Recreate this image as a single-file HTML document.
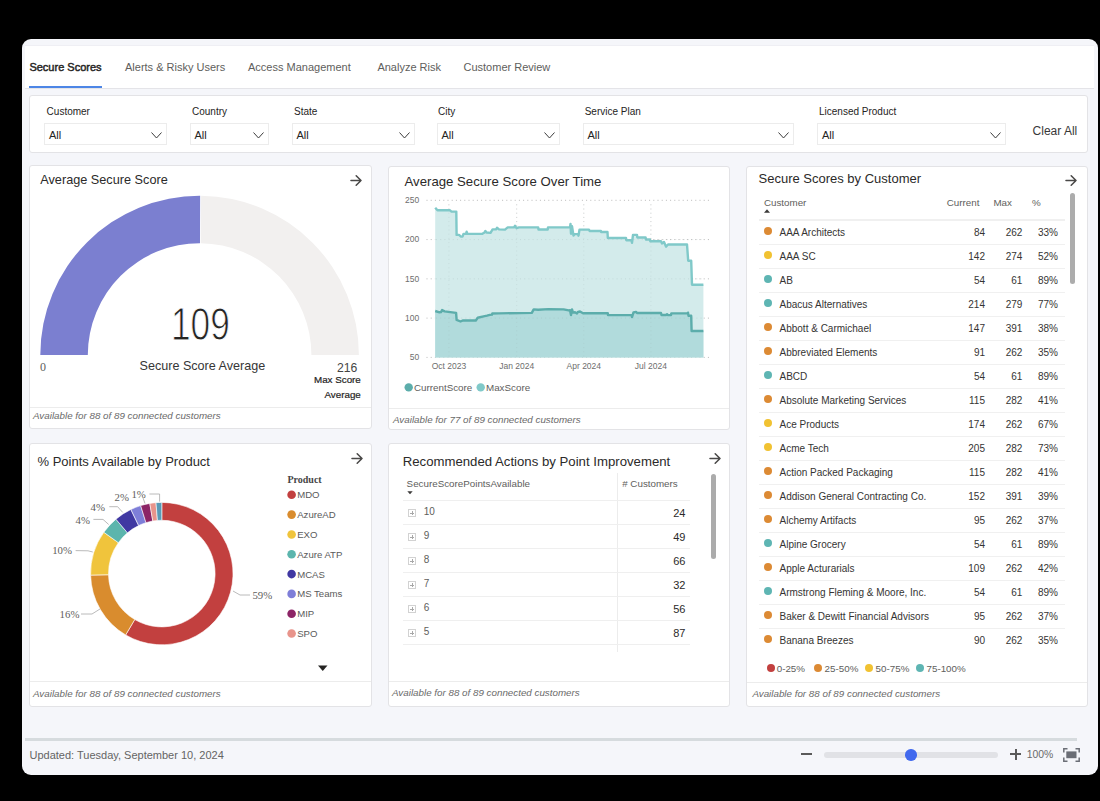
<!DOCTYPE html><html><head><meta charset="utf-8"><style>
html,body{margin:0;padding:0}
body{width:1100px;height:801px;background:#000;position:relative;overflow:hidden;font-family:"Liberation Sans",sans-serif}
.t{position:absolute;line-height:1;white-space:nowrap}
</style></head><body>
<div style="position:absolute;left:22px;top:39px;width:1076px;height:736px;background:#f5f6fa;border-radius:9px"></div>
<div style="position:absolute;left:25px;top:45px;width:1069px;height:1px;background:#efeff4"></div>
<div style="position:absolute;left:25px;top:46px;width:1069px;height:42px;background:#fff"></div>
<div style="position:absolute;left:25px;top:88px;width:1069px;height:1px;background:#e4e4e8"></div>
<div style="position:absolute;left:29px;top:86px;width:73px;height:2px;background:#4d86e6"></div>
<div class="t" style="left:29.40px;top:61.69px;font-size:11px;color:#252423;font-weight:400;font-style:normal;font-family:'Liberation Sans', sans-serif;-webkit-text-stroke:0.45px #252423">Secure Scores</div>
<div class="t" style="left:125.00px;top:61.69px;font-size:11px;color:#605e5c;font-weight:400;font-style:normal;font-family:'Liberation Sans', sans-serif;">Alerts &amp; Risky Users</div>
<div class="t" style="left:248.00px;top:61.69px;font-size:11px;color:#605e5c;font-weight:400;font-style:normal;font-family:'Liberation Sans', sans-serif;">Access Management</div>
<div class="t" style="left:377.40px;top:61.69px;font-size:11px;color:#605e5c;font-weight:400;font-style:normal;font-family:'Liberation Sans', sans-serif;">Analyze Risk</div>
<div class="t" style="left:463.50px;top:61.69px;font-size:11px;color:#605e5c;font-weight:400;font-style:normal;font-family:'Liberation Sans', sans-serif;">Customer Review</div>
<div style="position:absolute;left:29px;top:95px;width:1059px;height:58px;background:#fff;border:1px solid #e3e3e6;border-radius:3px;box-sizing:border-box"></div>
<div class="t" style="left:46.60px;top:106.83px;font-size:10px;color:#252423;font-weight:400;font-style:normal;font-family:'Liberation Sans', sans-serif;">Customer</div>
<div style="position:absolute;left:44px;top:123px;width:123px;height:21.5px;border:1px solid #ececec;box-sizing:border-box;background:#fff"><svg width="11" height="7" viewBox="0 0 11 7" style="position:absolute;right:4px;top:7.5px"><path d="M0.5 0.5 L5.5 6 L10.5 0.5" fill="none" stroke="#3c3c3c" stroke-width="1"/></svg></div>
<div class="t" style="left:49.00px;top:130.29px;font-size:11px;color:#252423;font-weight:400;font-style:normal;font-family:'Liberation Sans', sans-serif;">All</div>
<div class="t" style="left:192.00px;top:106.83px;font-size:10px;color:#252423;font-weight:400;font-style:normal;font-family:'Liberation Sans', sans-serif;">Country</div>
<div style="position:absolute;left:189.5px;top:123px;width:79px;height:21.5px;border:1px solid #ececec;box-sizing:border-box;background:#fff"><svg width="11" height="7" viewBox="0 0 11 7" style="position:absolute;right:4px;top:7.5px"><path d="M0.5 0.5 L5.5 6 L10.5 0.5" fill="none" stroke="#3c3c3c" stroke-width="1"/></svg></div>
<div class="t" style="left:194.50px;top:130.29px;font-size:11px;color:#252423;font-weight:400;font-style:normal;font-family:'Liberation Sans', sans-serif;">All</div>
<div class="t" style="left:294.00px;top:106.83px;font-size:10px;color:#252423;font-weight:400;font-style:normal;font-family:'Liberation Sans', sans-serif;">State</div>
<div style="position:absolute;left:291.5px;top:123px;width:123px;height:21.5px;border:1px solid #ececec;box-sizing:border-box;background:#fff"><svg width="11" height="7" viewBox="0 0 11 7" style="position:absolute;right:4px;top:7.5px"><path d="M0.5 0.5 L5.5 6 L10.5 0.5" fill="none" stroke="#3c3c3c" stroke-width="1"/></svg></div>
<div class="t" style="left:296.50px;top:130.29px;font-size:11px;color:#252423;font-weight:400;font-style:normal;font-family:'Liberation Sans', sans-serif;">All</div>
<div class="t" style="left:438.00px;top:106.83px;font-size:10px;color:#252423;font-weight:400;font-style:normal;font-family:'Liberation Sans', sans-serif;">City</div>
<div style="position:absolute;left:436.5px;top:123px;width:123px;height:21.5px;border:1px solid #ececec;box-sizing:border-box;background:#fff"><svg width="11" height="7" viewBox="0 0 11 7" style="position:absolute;right:4px;top:7.5px"><path d="M0.5 0.5 L5.5 6 L10.5 0.5" fill="none" stroke="#3c3c3c" stroke-width="1"/></svg></div>
<div class="t" style="left:441.50px;top:130.29px;font-size:11px;color:#252423;font-weight:400;font-style:normal;font-family:'Liberation Sans', sans-serif;">All</div>
<div class="t" style="left:584.70px;top:106.83px;font-size:10px;color:#252423;font-weight:400;font-style:normal;font-family:'Liberation Sans', sans-serif;">Service Plan</div>
<div style="position:absolute;left:582.5px;top:123px;width:211px;height:21.5px;border:1px solid #ececec;box-sizing:border-box;background:#fff"><svg width="11" height="7" viewBox="0 0 11 7" style="position:absolute;right:4px;top:7.5px"><path d="M0.5 0.5 L5.5 6 L10.5 0.5" fill="none" stroke="#3c3c3c" stroke-width="1"/></svg></div>
<div class="t" style="left:587.50px;top:130.29px;font-size:11px;color:#252423;font-weight:400;font-style:normal;font-family:'Liberation Sans', sans-serif;">All</div>
<div class="t" style="left:819.00px;top:106.83px;font-size:10px;color:#252423;font-weight:400;font-style:normal;font-family:'Liberation Sans', sans-serif;">Licensed Product</div>
<div style="position:absolute;left:817px;top:123px;width:189px;height:21.5px;border:1px solid #ececec;box-sizing:border-box;background:#fff"><svg width="11" height="7" viewBox="0 0 11 7" style="position:absolute;right:4px;top:7.5px"><path d="M0.5 0.5 L5.5 6 L10.5 0.5" fill="none" stroke="#3c3c3c" stroke-width="1"/></svg></div>
<div class="t" style="left:822.00px;top:130.29px;font-size:11px;color:#252423;font-weight:400;font-style:normal;font-family:'Liberation Sans', sans-serif;">All</div>
<div class="t" style="left:1032.60px;top:125.34px;font-size:12px;color:#383838;font-weight:400;font-style:normal;font-family:'Liberation Sans', sans-serif;">Clear All</div>
<div style="position:absolute;left:29px;top:165px;width:343px;height:264px;background:#fff;border:1px solid #e3e3e6;border-radius:3px;box-sizing:border-box"></div>
<div style="position:absolute;left:30px;top:406.5px;width:341px;height:1px;background:#ececec"></div>
<div class="t" style="left:33.00px;top:411.20px;font-size:9.8px;color:#6a6a6a;font-weight:400;font-style:italic;font-family:'Liberation Sans', sans-serif;">Available for 88 of 89 connected customers</div>
<div style="position:absolute;left:388px;top:166px;width:342px;height:264px;background:#fff;border:1px solid #e3e3e6;border-radius:3px;box-sizing:border-box"></div>
<div style="position:absolute;left:389px;top:407.5px;width:340px;height:1px;background:#ececec"></div>
<div class="t" style="left:393.00px;top:414.50px;font-size:9.8px;color:#6a6a6a;font-weight:400;font-style:italic;font-family:'Liberation Sans', sans-serif;">Available for 77 of 89 connected customers</div>
<div style="position:absolute;left:746px;top:166px;width:342px;height:541px;background:#fff;border:1px solid #e3e3e6;border-radius:3px;box-sizing:border-box"></div>
<div style="position:absolute;left:747px;top:681.5px;width:340px;height:1px;background:#ececec"></div>
<div class="t" style="left:752.40px;top:688.60px;font-size:9.8px;color:#6a6a6a;font-weight:400;font-style:italic;font-family:'Liberation Sans', sans-serif;">Available for 88 of 89 connected customers</div>
<div style="position:absolute;left:29px;top:443px;width:343px;height:264px;background:#fff;border:1px solid #e3e3e6;border-radius:3px;box-sizing:border-box"></div>
<div style="position:absolute;left:30px;top:680.5px;width:341px;height:1px;background:#ececec"></div>
<div class="t" style="left:33.00px;top:688.90px;font-size:9.8px;color:#6a6a6a;font-weight:400;font-style:italic;font-family:'Liberation Sans', sans-serif;">Available for 88 of 89 connected customers</div>
<div style="position:absolute;left:388px;top:443px;width:342px;height:264px;background:#fff;border:1px solid #e3e3e6;border-radius:3px;box-sizing:border-box"></div>
<div style="position:absolute;left:389px;top:680.5px;width:340px;height:1px;background:#ececec"></div>
<div class="t" style="left:392.00px;top:688.30px;font-size:9.8px;color:#6a6a6a;font-weight:400;font-style:italic;font-family:'Liberation Sans', sans-serif;">Available for 88 of 89 connected customers</div>
<div class="t" style="left:40.30px;top:173.85px;font-size:12.7px;color:#2b2a29;font-weight:400;font-style:normal;font-family:'Liberation Sans', sans-serif;">Average Secure Score</div>
<svg style="position:absolute;left:349.45px;top:174.10px" width="14" height="13" viewBox="0 0 14 13"><path d="M2 6.5 H12 M7.2 1.7 L12 6.5 L7.2 11.3" fill="none" stroke="#4a4948" stroke-width="1.55" stroke-linecap="round" stroke-linejoin="round"/></svg>
<div class="t" style="left:404.50px;top:174.63px;font-size:13.2px;color:#2b2a29;font-weight:400;font-style:normal;font-family:'Liberation Sans', sans-serif;">Average Secure Score Over Time</div>
<div class="t" style="left:758.50px;top:172.00px;font-size:13px;color:#2b2a29;font-weight:400;font-style:normal;font-family:'Liberation Sans', sans-serif;">Secure Scores by Customer</div>
<svg style="position:absolute;left:1064.15px;top:174.10px" width="14" height="13" viewBox="0 0 14 13"><path d="M2 6.5 H12 M7.2 1.7 L12 6.5 L7.2 11.3" fill="none" stroke="#4a4948" stroke-width="1.55" stroke-linecap="round" stroke-linejoin="round"/></svg>
<div class="t" style="left:37.50px;top:454.80px;font-size:13px;color:#2b2a29;font-weight:400;font-style:normal;font-family:'Liberation Sans', sans-serif;">% Points Available by Product</div>
<svg style="position:absolute;left:349.55px;top:452.00px" width="14" height="13" viewBox="0 0 14 13"><path d="M2 6.5 H12 M7.2 1.7 L12 6.5 L7.2 11.3" fill="none" stroke="#4a4948" stroke-width="1.55" stroke-linecap="round" stroke-linejoin="round"/></svg>
<div class="t" style="left:402.70px;top:454.63px;font-size:13.2px;color:#2b2a29;font-weight:400;font-style:normal;font-family:'Liberation Sans', sans-serif;">Recommended Actions by Point Improvement</div>
<svg style="position:absolute;left:707.65px;top:452.00px" width="14" height="13" viewBox="0 0 14 13"><path d="M2 6.5 H12 M7.2 1.7 L12 6.5 L7.2 11.3" fill="none" stroke="#4a4948" stroke-width="1.55" stroke-linecap="round" stroke-linejoin="round"/></svg>
<div style="position:absolute;left:25px;top:738.2px;width:1052px;height:2.5px;background:#d6dbde"></div>
<div class="t" style="left:29.50px;top:750.29px;font-size:11px;color:#646464;font-weight:400;font-style:normal;font-family:'Liberation Sans', sans-serif;">Updated: Tuesday, September 10, 2024</div>
<svg style="position:absolute;left:0;top:0" width="1100" height="801"><path d="M40.30 355.00 A159.3 159.3 0 0 1 200.16 195.70 L199.99 243.20 A111.8 111.8 0 0 0 87.80 355.00 Z" fill="#7b7fd0"/><path d="M201.13 195.71 A159.3 159.3 0 0 1 358.90 355.00 L311.40 355.00 A111.8 111.8 0 0 0 200.67 243.21 Z" fill="#f2f0ef"/></svg>
<div class="t" style="left:170.50px;top:302.48px;font-size:45.5px;color:#252423;font-weight:400;font-style:normal;font-family:'Liberation Sans', sans-serif;transform:scaleX(0.775);transform-origin:0 0;-webkit-text-stroke:1px #fff">109</div>
<div class="t" style="left:139.50px;top:360.13px;font-size:12.6px;color:#363636;font-weight:400;font-style:normal;font-family:'Liberation Sans', sans-serif;">Secure Score Average</div>
<div class="t" style="left:39.90px;top:361.45px;font-size:12px;color:#605e5c;font-weight:400;font-style:normal;font-family:'Liberation Serif', serif;">0</div>
<div class="t" style="right:742.70px;top:361.67px;font-size:12.2px;color:#444444;font-weight:400;font-style:normal;font-family:'Liberation Sans', sans-serif;">216</div>
<div class="t" style="right:739.20px;top:374.70px;font-size:9.8px;color:#252423;font-weight:400;font-style:normal;font-family:'Liberation Sans', sans-serif;-webkit-text-stroke:0.2px #252423">Max Score</div>
<div class="t" style="right:739.20px;top:389.70px;font-size:9.8px;color:#252423;font-weight:400;font-style:normal;font-family:'Liberation Sans', sans-serif;-webkit-text-stroke:0.2px #252423">Average</div>
<svg style="position:absolute;left:0;top:0" width="1100" height="801"><line x1="426.5" x2="711" y1="357.40" y2="357.40" stroke="#b9b9b9" stroke-width="1" stroke-dasharray="1 3.2"/><line x1="426.5" x2="711" y1="318.12" y2="318.12" stroke="#b9b9b9" stroke-width="1" stroke-dasharray="1 3.2"/><line x1="426.5" x2="711" y1="278.85" y2="278.85" stroke="#b9b9b9" stroke-width="1" stroke-dasharray="1 3.2"/><line x1="426.5" x2="711" y1="239.57" y2="239.57" stroke="#b9b9b9" stroke-width="1" stroke-dasharray="1 3.2"/><line x1="426.5" x2="711" y1="200.30" y2="200.30" stroke="#b9b9b9" stroke-width="1" stroke-dasharray="1 3.2"/><line x1="448.9" x2="448.9" y1="204.30" y2="357.40" stroke="#d9d9d9" stroke-width="1" stroke-dasharray="1 3.2"/><line x1="516.7" x2="516.7" y1="204.30" y2="357.40" stroke="#d9d9d9" stroke-width="1" stroke-dasharray="1 3.2"/><line x1="583.8" x2="583.8" y1="204.30" y2="357.40" stroke="#d9d9d9" stroke-width="1" stroke-dasharray="1 3.2"/><line x1="650.9" x2="650.9" y1="204.30" y2="357.40" stroke="#d9d9d9" stroke-width="1" stroke-dasharray="1 3.2"/><path d="M435.20 207.76 L437.50 210.28 L450.00 210.28 L451.50 211.61 L456.30 211.61 L456.60 234.86 L459.00 234.86 L461.00 236.59 L462.50 236.59 L463.50 233.84 L466.00 233.84 L466.60 231.72 L467.40 233.84 L482.40 233.84 L484.50 232.51 L485.40 230.93 L486.50 232.51 L490.50 232.90 L492.60 229.36 L496.00 229.36 L497.00 227.79 L499.00 229.36 L505.00 229.60 L507.70 227.40 L514.00 227.40 L515.00 225.83 L516.50 228.19 L519.00 227.40 L538.20 227.40 L538.50 229.52 L547.70 229.52 L548.00 227.40 L570.00 227.40 L570.50 223.86 L571.00 233.76 L572.00 226.22 L573.50 235.65 L574.50 234.08 L578.00 234.08 L578.50 235.65 L579.50 229.60 L589.00 229.60 L589.50 230.93 L600.90 230.93 L601.00 231.96 L607.50 231.96 L607.80 238.00 L626.00 238.00 L626.30 240.20 L631.50 240.20 L632.00 242.87 L633.00 234.86 L637.00 234.86 L637.30 237.45 L645.60 237.45 L645.90 239.57 L650.00 239.57 L650.30 241.30 L661.00 241.30 L662.00 243.50 L664.00 241.93 L666.00 246.64 L668.00 244.45 L687.00 244.45 L688.20 260.78 L691.20 260.78 L692.00 284.74 L703.40 284.74 L703.4 357.40 L435.2 357.40 Z" fill="#d3ebeb"/><path d="M435.20 310.98 L439.50 312.31 L441.00 312.16 L442.10 310.11 L444.60 311.37 L456.10 312.86 L456.60 319.93 L460.50 321.50 L463.10 320.48 L475.80 320.48 L477.70 317.73 L484.70 316.08 L487.00 315.61 L489.80 314.83 L492.00 314.67 L492.30 313.49 L498.70 313.33 L531.80 312.86 L533.70 309.33 L538.10 309.72 L548.30 309.09 L563.60 309.33 L568.70 310.43 L570.00 310.27 L571.00 314.98 L572.00 309.48 L573.00 312.63 L575.00 312.23 L577.00 313.41 L578.00 311.84 L580.00 311.45 L583.00 313.18 L607.80 313.25 L608.00 315.14 L631.60 315.14 L632.00 317.03 L633.50 312.47 L636.00 311.84 L637.00 313.02 L661.00 313.02 L661.50 314.98 L666.00 314.98 L667.00 314.20 L668.00 315.14 L671.00 315.14 L671.30 313.41 L687.60 313.41 L688.00 312.63 L688.50 315.77 L691.20 315.77 L691.60 330.93 L703.40 330.93 L703.4 357.40 L435.2 357.40 Z" fill="#b1dbdc"/><path d="M435.20 207.76 L437.50 210.28 L450.00 210.28 L451.50 211.61 L456.30 211.61 L456.60 234.86 L459.00 234.86 L461.00 236.59 L462.50 236.59 L463.50 233.84 L466.00 233.84 L466.60 231.72 L467.40 233.84 L482.40 233.84 L484.50 232.51 L485.40 230.93 L486.50 232.51 L490.50 232.90 L492.60 229.36 L496.00 229.36 L497.00 227.79 L499.00 229.36 L505.00 229.60 L507.70 227.40 L514.00 227.40 L515.00 225.83 L516.50 228.19 L519.00 227.40 L538.20 227.40 L538.50 229.52 L547.70 229.52 L548.00 227.40 L570.00 227.40 L570.50 223.86 L571.00 233.76 L572.00 226.22 L573.50 235.65 L574.50 234.08 L578.00 234.08 L578.50 235.65 L579.50 229.60 L589.00 229.60 L589.50 230.93 L600.90 230.93 L601.00 231.96 L607.50 231.96 L607.80 238.00 L626.00 238.00 L626.30 240.20 L631.50 240.20 L632.00 242.87 L633.00 234.86 L637.00 234.86 L637.30 237.45 L645.60 237.45 L645.90 239.57 L650.00 239.57 L650.30 241.30 L661.00 241.30 L662.00 243.50 L664.00 241.93 L666.00 246.64 L668.00 244.45 L687.00 244.45 L688.20 260.78 L691.20 260.78 L692.00 284.74 L703.40 284.74" fill="none" stroke="#80c9c9" stroke-width="2.4" stroke-linejoin="round"/><path d="M435.20 310.98 L439.50 312.31 L441.00 312.16 L442.10 310.11 L444.60 311.37 L456.10 312.86 L456.60 319.93 L460.50 321.50 L463.10 320.48 L475.80 320.48 L477.70 317.73 L484.70 316.08 L487.00 315.61 L489.80 314.83 L492.00 314.67 L492.30 313.49 L498.70 313.33 L531.80 312.86 L533.70 309.33 L538.10 309.72 L548.30 309.09 L563.60 309.33 L568.70 310.43 L570.00 310.27 L571.00 314.98 L572.00 309.48 L573.00 312.63 L575.00 312.23 L577.00 313.41 L578.00 311.84 L580.00 311.45 L583.00 313.18 L607.80 313.25 L608.00 315.14 L631.60 315.14 L632.00 317.03 L633.50 312.47 L636.00 311.84 L637.00 313.02 L661.00 313.02 L661.50 314.98 L666.00 314.98 L667.00 314.20 L668.00 315.14 L671.00 315.14 L671.30 313.41 L687.60 313.41 L688.00 312.63 L688.50 315.77 L691.20 315.77 L691.60 330.93 L703.40 330.93" fill="none" stroke="#5cadab" stroke-width="2.4" stroke-linejoin="round"/><line x1="436" x2="703" y1="318.12" y2="318.12" stroke="#9aa" stroke-opacity="0.25" stroke-width="1" stroke-dasharray="1 3.2"/><line x1="436" x2="703" y1="278.85" y2="278.85" stroke="#9aa" stroke-opacity="0.25" stroke-width="1" stroke-dasharray="1 3.2"/><line x1="436" x2="703" y1="239.57" y2="239.57" stroke="#9aa" stroke-opacity="0.25" stroke-width="1" stroke-dasharray="1 3.2"/><line x1="448.9" x2="448.9" y1="204.30" y2="357.40" stroke="#9aa" stroke-opacity="0.2" stroke-width="1" stroke-dasharray="1 3.2"/><line x1="516.7" x2="516.7" y1="204.30" y2="357.40" stroke="#9aa" stroke-opacity="0.2" stroke-width="1" stroke-dasharray="1 3.2"/><line x1="583.8" x2="583.8" y1="204.30" y2="357.40" stroke="#9aa" stroke-opacity="0.2" stroke-width="1" stroke-dasharray="1 3.2"/><line x1="650.9" x2="650.9" y1="204.30" y2="357.40" stroke="#9aa" stroke-opacity="0.2" stroke-width="1" stroke-dasharray="1 3.2"/><circle cx="408.7" cy="387.4" r="4.2" fill="#5cadab"/><circle cx="480.7" cy="387.4" r="4.2" fill="#80c9c9"/></svg>
<div class="t" style="right:680.80px;top:353.30px;font-size:8.5px;color:#6e6e6e;font-weight:400;font-style:normal;font-family:'Liberation Sans', sans-serif;">50</div>
<div class="t" style="right:680.80px;top:314.03px;font-size:8.5px;color:#6e6e6e;font-weight:400;font-style:normal;font-family:'Liberation Sans', sans-serif;">100</div>
<div class="t" style="right:680.80px;top:274.75px;font-size:8.5px;color:#6e6e6e;font-weight:400;font-style:normal;font-family:'Liberation Sans', sans-serif;">150</div>
<div class="t" style="right:680.80px;top:235.48px;font-size:8.5px;color:#6e6e6e;font-weight:400;font-style:normal;font-family:'Liberation Sans', sans-serif;">200</div>
<div class="t" style="right:680.80px;top:196.20px;font-size:8.5px;color:#6e6e6e;font-weight:400;font-style:normal;font-family:'Liberation Sans', sans-serif;">250</div>
<div class="t" style="left:448.90px;transform:translateX(-50%);top:361.80px;font-size:8.5px;color:#6e6e6e;font-weight:400;font-style:normal;font-family:'Liberation Sans', sans-serif;">Oct 2023</div>
<div class="t" style="left:516.70px;transform:translateX(-50%);top:361.80px;font-size:8.5px;color:#6e6e6e;font-weight:400;font-style:normal;font-family:'Liberation Sans', sans-serif;">Jan 2024</div>
<div class="t" style="left:583.80px;transform:translateX(-50%);top:361.80px;font-size:8.5px;color:#6e6e6e;font-weight:400;font-style:normal;font-family:'Liberation Sans', sans-serif;">Apr 2024</div>
<div class="t" style="left:650.90px;transform:translateX(-50%);top:361.80px;font-size:8.5px;color:#6e6e6e;font-weight:400;font-style:normal;font-family:'Liberation Sans', sans-serif;">Jul 2024</div>
<div class="t" style="left:414.00px;top:382.70px;font-size:9.8px;color:#605e5c;font-weight:400;font-style:normal;font-family:'Liberation Sans', sans-serif;">CurrentScore</div>
<div class="t" style="left:486.00px;top:382.70px;font-size:9.8px;color:#605e5c;font-weight:400;font-style:normal;font-family:'Liberation Sans', sans-serif;">MaxScore</div>
<div class="t" style="left:763.90px;top:197.50px;font-size:9.8px;color:#605e5c;font-weight:400;font-style:normal;font-family:'Liberation Sans', sans-serif;">Customer</div>
<div class="t" style="right:120.60px;top:197.50px;font-size:9.8px;color:#605e5c;font-weight:400;font-style:normal;font-family:'Liberation Sans', sans-serif;">Current</div>
<div class="t" style="left:993.40px;top:197.50px;font-size:9.8px;color:#605e5c;font-weight:400;font-style:normal;font-family:'Liberation Sans', sans-serif;">Max</div>
<div class="t" style="left:1031.90px;top:197.50px;font-size:9.8px;color:#605e5c;font-weight:400;font-style:normal;font-family:'Liberation Sans', sans-serif;">%</div>
<svg style="position:absolute;left:764px;top:209px" width="6" height="4" viewBox="0 0 6 4"><path d="M0 3.8 L3 0.3 L6 3.8 Z" fill="#3b3a39"/></svg>
<div style="position:absolute;left:759px;top:219px;width:306px;height:2px;background:#f0f0f0"></div>
<div style="position:absolute;left:764px;top:227px;width:8px;height:8px;border-radius:50%;background:#dc8a34"></div>
<div class="t" style="left:779.50px;top:227.94px;font-size:10px;color:#353433;font-weight:400;font-style:normal;font-family:'Liberation Sans', sans-serif;">AAA Architects</div>
<div class="t" style="right:115.00px;top:227.94px;font-size:10px;color:#353433;font-weight:400;font-style:normal;font-family:'Liberation Sans', sans-serif;">84</div>
<div class="t" style="right:77.60px;top:227.94px;font-size:10px;color:#353433;font-weight:400;font-style:normal;font-family:'Liberation Sans', sans-serif;">262</div>
<div class="t" style="right:42.00px;top:227.94px;font-size:10px;color:#353433;font-weight:400;font-style:normal;font-family:'Liberation Sans', sans-serif;">33%</div>
<div style="position:absolute;left:759px;top:244px;width:306px;height:1px;background:#f0f0f0"></div>
<div style="position:absolute;left:764px;top:251px;width:8px;height:8px;border-radius:50%;background:#f1c232"></div>
<div class="t" style="left:779.50px;top:251.93px;font-size:10px;color:#353433;font-weight:400;font-style:normal;font-family:'Liberation Sans', sans-serif;">AAA SC</div>
<div class="t" style="right:115.00px;top:251.93px;font-size:10px;color:#353433;font-weight:400;font-style:normal;font-family:'Liberation Sans', sans-serif;">142</div>
<div class="t" style="right:77.60px;top:251.93px;font-size:10px;color:#353433;font-weight:400;font-style:normal;font-family:'Liberation Sans', sans-serif;">274</div>
<div class="t" style="right:42.00px;top:251.93px;font-size:10px;color:#353433;font-weight:400;font-style:normal;font-family:'Liberation Sans', sans-serif;">52%</div>
<div style="position:absolute;left:759px;top:268px;width:306px;height:1px;background:#f0f0f0"></div>
<div style="position:absolute;left:764px;top:275px;width:8px;height:8px;border-radius:50%;background:#5eb5b3"></div>
<div class="t" style="left:779.50px;top:275.94px;font-size:10px;color:#353433;font-weight:400;font-style:normal;font-family:'Liberation Sans', sans-serif;">AB</div>
<div class="t" style="right:115.00px;top:275.94px;font-size:10px;color:#353433;font-weight:400;font-style:normal;font-family:'Liberation Sans', sans-serif;">54</div>
<div class="t" style="right:77.60px;top:275.94px;font-size:10px;color:#353433;font-weight:400;font-style:normal;font-family:'Liberation Sans', sans-serif;">61</div>
<div class="t" style="right:42.00px;top:275.94px;font-size:10px;color:#353433;font-weight:400;font-style:normal;font-family:'Liberation Sans', sans-serif;">89%</div>
<div style="position:absolute;left:759px;top:292px;width:306px;height:1px;background:#f0f0f0"></div>
<div style="position:absolute;left:764px;top:299px;width:8px;height:8px;border-radius:50%;background:#5eb5b3"></div>
<div class="t" style="left:779.50px;top:299.94px;font-size:10px;color:#353433;font-weight:400;font-style:normal;font-family:'Liberation Sans', sans-serif;">Abacus Alternatives</div>
<div class="t" style="right:115.00px;top:299.94px;font-size:10px;color:#353433;font-weight:400;font-style:normal;font-family:'Liberation Sans', sans-serif;">214</div>
<div class="t" style="right:77.60px;top:299.94px;font-size:10px;color:#353433;font-weight:400;font-style:normal;font-family:'Liberation Sans', sans-serif;">279</div>
<div class="t" style="right:42.00px;top:299.94px;font-size:10px;color:#353433;font-weight:400;font-style:normal;font-family:'Liberation Sans', sans-serif;">77%</div>
<div style="position:absolute;left:759px;top:316px;width:306px;height:1px;background:#f0f0f0"></div>
<div style="position:absolute;left:764px;top:323px;width:8px;height:8px;border-radius:50%;background:#dc8a34"></div>
<div class="t" style="left:779.50px;top:323.94px;font-size:10px;color:#353433;font-weight:400;font-style:normal;font-family:'Liberation Sans', sans-serif;">Abbott &amp; Carmichael</div>
<div class="t" style="right:115.00px;top:323.94px;font-size:10px;color:#353433;font-weight:400;font-style:normal;font-family:'Liberation Sans', sans-serif;">147</div>
<div class="t" style="right:77.60px;top:323.94px;font-size:10px;color:#353433;font-weight:400;font-style:normal;font-family:'Liberation Sans', sans-serif;">391</div>
<div class="t" style="right:42.00px;top:323.94px;font-size:10px;color:#353433;font-weight:400;font-style:normal;font-family:'Liberation Sans', sans-serif;">38%</div>
<div style="position:absolute;left:759px;top:340px;width:306px;height:1px;background:#f0f0f0"></div>
<div style="position:absolute;left:764px;top:347px;width:8px;height:8px;border-radius:50%;background:#dc8a34"></div>
<div class="t" style="left:779.50px;top:347.94px;font-size:10px;color:#353433;font-weight:400;font-style:normal;font-family:'Liberation Sans', sans-serif;">Abbreviated Elements</div>
<div class="t" style="right:115.00px;top:347.94px;font-size:10px;color:#353433;font-weight:400;font-style:normal;font-family:'Liberation Sans', sans-serif;">91</div>
<div class="t" style="right:77.60px;top:347.94px;font-size:10px;color:#353433;font-weight:400;font-style:normal;font-family:'Liberation Sans', sans-serif;">262</div>
<div class="t" style="right:42.00px;top:347.94px;font-size:10px;color:#353433;font-weight:400;font-style:normal;font-family:'Liberation Sans', sans-serif;">35%</div>
<div style="position:absolute;left:759px;top:364px;width:306px;height:1px;background:#f0f0f0"></div>
<div style="position:absolute;left:764px;top:371px;width:8px;height:8px;border-radius:50%;background:#5eb5b3"></div>
<div class="t" style="left:779.50px;top:371.94px;font-size:10px;color:#353433;font-weight:400;font-style:normal;font-family:'Liberation Sans', sans-serif;">ABCD</div>
<div class="t" style="right:115.00px;top:371.94px;font-size:10px;color:#353433;font-weight:400;font-style:normal;font-family:'Liberation Sans', sans-serif;">54</div>
<div class="t" style="right:77.60px;top:371.94px;font-size:10px;color:#353433;font-weight:400;font-style:normal;font-family:'Liberation Sans', sans-serif;">61</div>
<div class="t" style="right:42.00px;top:371.94px;font-size:10px;color:#353433;font-weight:400;font-style:normal;font-family:'Liberation Sans', sans-serif;">89%</div>
<div style="position:absolute;left:759px;top:388px;width:306px;height:1px;background:#f0f0f0"></div>
<div style="position:absolute;left:764px;top:395px;width:8px;height:8px;border-radius:50%;background:#dc8a34"></div>
<div class="t" style="left:779.50px;top:395.94px;font-size:10px;color:#353433;font-weight:400;font-style:normal;font-family:'Liberation Sans', sans-serif;">Absolute Marketing Services</div>
<div class="t" style="right:115.00px;top:395.94px;font-size:10px;color:#353433;font-weight:400;font-style:normal;font-family:'Liberation Sans', sans-serif;">115</div>
<div class="t" style="right:77.60px;top:395.94px;font-size:10px;color:#353433;font-weight:400;font-style:normal;font-family:'Liberation Sans', sans-serif;">282</div>
<div class="t" style="right:42.00px;top:395.94px;font-size:10px;color:#353433;font-weight:400;font-style:normal;font-family:'Liberation Sans', sans-serif;">41%</div>
<div style="position:absolute;left:759px;top:412px;width:306px;height:1px;background:#f0f0f0"></div>
<div style="position:absolute;left:764px;top:419px;width:8px;height:8px;border-radius:50%;background:#f1c232"></div>
<div class="t" style="left:779.50px;top:419.94px;font-size:10px;color:#353433;font-weight:400;font-style:normal;font-family:'Liberation Sans', sans-serif;">Ace Products</div>
<div class="t" style="right:115.00px;top:419.94px;font-size:10px;color:#353433;font-weight:400;font-style:normal;font-family:'Liberation Sans', sans-serif;">174</div>
<div class="t" style="right:77.60px;top:419.94px;font-size:10px;color:#353433;font-weight:400;font-style:normal;font-family:'Liberation Sans', sans-serif;">262</div>
<div class="t" style="right:42.00px;top:419.94px;font-size:10px;color:#353433;font-weight:400;font-style:normal;font-family:'Liberation Sans', sans-serif;">67%</div>
<div style="position:absolute;left:759px;top:436px;width:306px;height:1px;background:#f0f0f0"></div>
<div style="position:absolute;left:764px;top:443px;width:8px;height:8px;border-radius:50%;background:#f1c232"></div>
<div class="t" style="left:779.50px;top:443.94px;font-size:10px;color:#353433;font-weight:400;font-style:normal;font-family:'Liberation Sans', sans-serif;">Acme Tech</div>
<div class="t" style="right:115.00px;top:443.94px;font-size:10px;color:#353433;font-weight:400;font-style:normal;font-family:'Liberation Sans', sans-serif;">205</div>
<div class="t" style="right:77.60px;top:443.94px;font-size:10px;color:#353433;font-weight:400;font-style:normal;font-family:'Liberation Sans', sans-serif;">282</div>
<div class="t" style="right:42.00px;top:443.94px;font-size:10px;color:#353433;font-weight:400;font-style:normal;font-family:'Liberation Sans', sans-serif;">73%</div>
<div style="position:absolute;left:759px;top:460px;width:306px;height:1px;background:#f0f0f0"></div>
<div style="position:absolute;left:764px;top:467px;width:8px;height:8px;border-radius:50%;background:#dc8a34"></div>
<div class="t" style="left:779.50px;top:467.94px;font-size:10px;color:#353433;font-weight:400;font-style:normal;font-family:'Liberation Sans', sans-serif;">Action Packed Packaging</div>
<div class="t" style="right:115.00px;top:467.94px;font-size:10px;color:#353433;font-weight:400;font-style:normal;font-family:'Liberation Sans', sans-serif;">115</div>
<div class="t" style="right:77.60px;top:467.94px;font-size:10px;color:#353433;font-weight:400;font-style:normal;font-family:'Liberation Sans', sans-serif;">282</div>
<div class="t" style="right:42.00px;top:467.94px;font-size:10px;color:#353433;font-weight:400;font-style:normal;font-family:'Liberation Sans', sans-serif;">41%</div>
<div style="position:absolute;left:759px;top:484px;width:306px;height:1px;background:#f0f0f0"></div>
<div style="position:absolute;left:764px;top:491px;width:8px;height:8px;border-radius:50%;background:#dc8a34"></div>
<div class="t" style="left:779.50px;top:491.94px;font-size:10px;color:#353433;font-weight:400;font-style:normal;font-family:'Liberation Sans', sans-serif;">Addison General Contracting Co.</div>
<div class="t" style="right:115.00px;top:491.94px;font-size:10px;color:#353433;font-weight:400;font-style:normal;font-family:'Liberation Sans', sans-serif;">152</div>
<div class="t" style="right:77.60px;top:491.94px;font-size:10px;color:#353433;font-weight:400;font-style:normal;font-family:'Liberation Sans', sans-serif;">391</div>
<div class="t" style="right:42.00px;top:491.94px;font-size:10px;color:#353433;font-weight:400;font-style:normal;font-family:'Liberation Sans', sans-serif;">39%</div>
<div style="position:absolute;left:759px;top:508px;width:306px;height:1px;background:#f0f0f0"></div>
<div style="position:absolute;left:764px;top:515px;width:8px;height:8px;border-radius:50%;background:#dc8a34"></div>
<div class="t" style="left:779.50px;top:515.93px;font-size:10px;color:#353433;font-weight:400;font-style:normal;font-family:'Liberation Sans', sans-serif;">Alchemy Artifacts</div>
<div class="t" style="right:115.00px;top:515.93px;font-size:10px;color:#353433;font-weight:400;font-style:normal;font-family:'Liberation Sans', sans-serif;">95</div>
<div class="t" style="right:77.60px;top:515.93px;font-size:10px;color:#353433;font-weight:400;font-style:normal;font-family:'Liberation Sans', sans-serif;">262</div>
<div class="t" style="right:42.00px;top:515.93px;font-size:10px;color:#353433;font-weight:400;font-style:normal;font-family:'Liberation Sans', sans-serif;">37%</div>
<div style="position:absolute;left:759px;top:532px;width:306px;height:1px;background:#f0f0f0"></div>
<div style="position:absolute;left:764px;top:539px;width:8px;height:8px;border-radius:50%;background:#5eb5b3"></div>
<div class="t" style="left:779.50px;top:539.93px;font-size:10px;color:#353433;font-weight:400;font-style:normal;font-family:'Liberation Sans', sans-serif;">Alpine Grocery</div>
<div class="t" style="right:115.00px;top:539.93px;font-size:10px;color:#353433;font-weight:400;font-style:normal;font-family:'Liberation Sans', sans-serif;">54</div>
<div class="t" style="right:77.60px;top:539.93px;font-size:10px;color:#353433;font-weight:400;font-style:normal;font-family:'Liberation Sans', sans-serif;">61</div>
<div class="t" style="right:42.00px;top:539.93px;font-size:10px;color:#353433;font-weight:400;font-style:normal;font-family:'Liberation Sans', sans-serif;">89%</div>
<div style="position:absolute;left:759px;top:556px;width:306px;height:1px;background:#f0f0f0"></div>
<div style="position:absolute;left:764px;top:563px;width:8px;height:8px;border-radius:50%;background:#dc8a34"></div>
<div class="t" style="left:779.50px;top:563.93px;font-size:10px;color:#353433;font-weight:400;font-style:normal;font-family:'Liberation Sans', sans-serif;">Apple Acturarials</div>
<div class="t" style="right:115.00px;top:563.93px;font-size:10px;color:#353433;font-weight:400;font-style:normal;font-family:'Liberation Sans', sans-serif;">109</div>
<div class="t" style="right:77.60px;top:563.93px;font-size:10px;color:#353433;font-weight:400;font-style:normal;font-family:'Liberation Sans', sans-serif;">262</div>
<div class="t" style="right:42.00px;top:563.93px;font-size:10px;color:#353433;font-weight:400;font-style:normal;font-family:'Liberation Sans', sans-serif;">42%</div>
<div style="position:absolute;left:759px;top:580px;width:306px;height:1px;background:#f0f0f0"></div>
<div style="position:absolute;left:764px;top:587px;width:8px;height:8px;border-radius:50%;background:#5eb5b3"></div>
<div class="t" style="left:779.50px;top:587.93px;font-size:10px;color:#353433;font-weight:400;font-style:normal;font-family:'Liberation Sans', sans-serif;">Armstrong Fleming &amp; Moore, Inc.</div>
<div class="t" style="right:115.00px;top:587.93px;font-size:10px;color:#353433;font-weight:400;font-style:normal;font-family:'Liberation Sans', sans-serif;">54</div>
<div class="t" style="right:77.60px;top:587.93px;font-size:10px;color:#353433;font-weight:400;font-style:normal;font-family:'Liberation Sans', sans-serif;">61</div>
<div class="t" style="right:42.00px;top:587.93px;font-size:10px;color:#353433;font-weight:400;font-style:normal;font-family:'Liberation Sans', sans-serif;">89%</div>
<div style="position:absolute;left:759px;top:604px;width:306px;height:1px;background:#f0f0f0"></div>
<div style="position:absolute;left:764px;top:611px;width:8px;height:8px;border-radius:50%;background:#dc8a34"></div>
<div class="t" style="left:779.50px;top:611.93px;font-size:10px;color:#353433;font-weight:400;font-style:normal;font-family:'Liberation Sans', sans-serif;">Baker &amp; Dewitt Financial Advisors</div>
<div class="t" style="right:115.00px;top:611.93px;font-size:10px;color:#353433;font-weight:400;font-style:normal;font-family:'Liberation Sans', sans-serif;">95</div>
<div class="t" style="right:77.60px;top:611.93px;font-size:10px;color:#353433;font-weight:400;font-style:normal;font-family:'Liberation Sans', sans-serif;">262</div>
<div class="t" style="right:42.00px;top:611.93px;font-size:10px;color:#353433;font-weight:400;font-style:normal;font-family:'Liberation Sans', sans-serif;">37%</div>
<div style="position:absolute;left:759px;top:628px;width:306px;height:1px;background:#f0f0f0"></div>
<div style="position:absolute;left:764px;top:635px;width:8px;height:8px;border-radius:50%;background:#dc8a34"></div>
<div class="t" style="left:779.50px;top:635.93px;font-size:10px;color:#353433;font-weight:400;font-style:normal;font-family:'Liberation Sans', sans-serif;">Banana Breezes</div>
<div class="t" style="right:115.00px;top:635.93px;font-size:10px;color:#353433;font-weight:400;font-style:normal;font-family:'Liberation Sans', sans-serif;">90</div>
<div class="t" style="right:77.60px;top:635.93px;font-size:10px;color:#353433;font-weight:400;font-style:normal;font-family:'Liberation Sans', sans-serif;">262</div>
<div class="t" style="right:42.00px;top:635.93px;font-size:10px;color:#353433;font-weight:400;font-style:normal;font-family:'Liberation Sans', sans-serif;">35%</div>
<div style="position:absolute;left:1069.6px;top:193.4px;width:5.2px;height:90.2px;background:#acacac;border-radius:3px"></div>
<div style="position:absolute;left:766.8px;top:664.4px;width:8px;height:8px;border-radius:50%;background:#c2403f"></div>
<div class="t" style="left:776.70px;top:663.50px;font-size:9.8px;color:#605e5c;font-weight:400;font-style:normal;font-family:'Liberation Sans', sans-serif;">0-25%</div>
<div style="position:absolute;left:813.6px;top:664.4px;width:8px;height:8px;border-radius:50%;background:#dc8a34"></div>
<div class="t" style="left:824.60px;top:663.50px;font-size:9.8px;color:#605e5c;font-weight:400;font-style:normal;font-family:'Liberation Sans', sans-serif;">25-50%</div>
<div style="position:absolute;left:865.3px;top:664.4px;width:8px;height:8px;border-radius:50%;background:#f1c232"></div>
<div class="t" style="left:875.60px;top:663.50px;font-size:9.8px;color:#605e5c;font-weight:400;font-style:normal;font-family:'Liberation Sans', sans-serif;">50-75%</div>
<div style="position:absolute;left:916.4px;top:664.4px;width:8px;height:8px;border-radius:50%;background:#5eb5b3"></div>
<div class="t" style="left:926.50px;top:663.50px;font-size:9.8px;color:#605e5c;font-weight:400;font-style:normal;font-family:'Liberation Sans', sans-serif;">75-100%</div>
<svg style="position:absolute;left:0;top:0" width="1100" height="801"><path d="M161.80 502.40 A71.2 71.2 0 1 1 125.67 634.95 L134.75 619.53 A53.3 53.3 0 1 0 161.80 520.30 Z" fill="#c2403f" stroke="#fff" stroke-width="0.6"/><path d="M125.67 634.95 A71.2 71.2 0 0 1 90.62 575.11 L108.51 574.73 A53.3 53.3 0 0 0 134.75 619.53 Z" fill="#d98c2e" stroke="#fff" stroke-width="0.6"/><path d="M90.62 575.11 A71.2 71.2 0 0 1 103.83 532.27 L118.40 542.66 A53.3 53.3 0 0 0 108.51 574.73 Z" fill="#f0c43c" stroke="#fff" stroke-width="0.6"/><path d="M103.83 532.27 A71.2 71.2 0 0 1 115.92 519.15 L127.45 532.84 A53.3 53.3 0 0 0 118.40 542.66 Z" fill="#5cb5ad" stroke="#fff" stroke-width="0.6"/><path d="M115.92 519.15 A71.2 71.2 0 0 1 130.89 509.46 L138.66 525.58 A53.3 53.3 0 0 0 127.45 532.84 Z" fill="#4038a2" stroke="#fff" stroke-width="0.6"/><path d="M130.89 509.46 A71.2 71.2 0 0 1 140.66 505.61 L145.98 522.70 A53.3 53.3 0 0 0 138.66 525.58 Z" fill="#7e7ed8" stroke="#fff" stroke-width="0.6"/><path d="M140.66 505.61 A71.2 71.2 0 0 1 149.79 503.42 L152.81 521.06 A53.3 53.3 0 0 0 145.98 522.70 Z" fill="#8c2466" stroke="#fff" stroke-width="0.6"/><path d="M149.79 503.42 A71.2 71.2 0 0 1 155.99 502.64 L157.45 520.48 A53.3 53.3 0 0 0 152.81 521.06 Z" fill="#e8948b" stroke="#fff" stroke-width="0.6"/><path d="M155.99 502.64 A71.2 71.2 0 0 1 161.80 502.40 L161.80 520.30 A53.3 53.3 0 0 0 157.45 520.48 Z" fill="#5a9ab6" stroke="#fff" stroke-width="0.6"/><path d="M233 591 L240 595 L250 595" fill="none" stroke="#a8a8a8" stroke-width="0.8"/><path d="M100 609 L92 614 L81 614" fill="none" stroke="#a8a8a8" stroke-width="0.8"/><path d="M75.6 550.6 L88 550.8 L92.8 552" fill="none" stroke="#a8a8a8" stroke-width="0.8"/><path d="M93.4 519.4 L103 519.4 L108.7 524.5" fill="none" stroke="#a8a8a8" stroke-width="0.8"/><path d="M109.3 506.7 L117.6 506.7 L122.7 512.4" fill="none" stroke="#a8a8a8" stroke-width="0.8"/><path d="M143 497.8 L145 503.5" fill="none" stroke="#a8a8a8" stroke-width="0.8"/><path d="M149.4 494 L159.6 494 L159.6 501.6" fill="none" stroke="#a8a8a8" stroke-width="0.8"/><circle cx="291.6" cy="494.80" r="4.3" fill="#c2403f"/><circle cx="291.6" cy="514.62" r="4.3" fill="#d98c2e"/><circle cx="291.6" cy="534.44" r="4.3" fill="#f0c43c"/><circle cx="291.6" cy="554.26" r="4.3" fill="#5cb5ad"/><circle cx="291.6" cy="574.08" r="4.3" fill="#4038a2"/><circle cx="291.6" cy="593.90" r="4.3" fill="#7e7ed8"/><circle cx="291.6" cy="613.72" r="4.3" fill="#8c2466"/><circle cx="291.6" cy="633.54" r="4.3" fill="#e8948b"/><path d="M318 665.5 L327.5 665.5 L322.75 671 Z" fill="#252423"/></svg>
<div class="t" style="left:297.20px;top:490.27px;font-size:9.6px;color:#5a5a5a;font-weight:400;font-style:normal;font-family:'Liberation Sans', sans-serif;">MDO</div>
<div class="t" style="left:297.20px;top:510.09px;font-size:9.6px;color:#5a5a5a;font-weight:400;font-style:normal;font-family:'Liberation Sans', sans-serif;">AzureAD</div>
<div class="t" style="left:297.20px;top:529.91px;font-size:9.6px;color:#5a5a5a;font-weight:400;font-style:normal;font-family:'Liberation Sans', sans-serif;">EXO</div>
<div class="t" style="left:297.20px;top:549.73px;font-size:9.6px;color:#5a5a5a;font-weight:400;font-style:normal;font-family:'Liberation Sans', sans-serif;">Azure ATP</div>
<div class="t" style="left:297.20px;top:569.55px;font-size:9.6px;color:#5a5a5a;font-weight:400;font-style:normal;font-family:'Liberation Sans', sans-serif;">MCAS</div>
<div class="t" style="left:297.20px;top:589.37px;font-size:9.6px;color:#5a5a5a;font-weight:400;font-style:normal;font-family:'Liberation Sans', sans-serif;">MS Teams</div>
<div class="t" style="left:297.20px;top:609.19px;font-size:9.6px;color:#5a5a5a;font-weight:400;font-style:normal;font-family:'Liberation Sans', sans-serif;">MIP</div>
<div class="t" style="left:297.20px;top:629.01px;font-size:9.6px;color:#5a5a5a;font-weight:400;font-style:normal;font-family:'Liberation Sans', sans-serif;">SPO</div>
<div class="t" style="left:287.40px;top:475.02px;font-size:10px;color:#464646;font-weight:700;font-style:normal;font-family:'Liberation Serif', serif;">Product</div>
<div class="t" style="left:252.40px;top:589.96px;font-size:10.8px;color:#605e5c;font-weight:400;font-style:normal;font-family:'Liberation Serif', serif;">59%</div>
<div class="t" style="right:1020.60px;top:608.96px;font-size:10.8px;color:#605e5c;font-weight:400;font-style:normal;font-family:'Liberation Serif', serif;">16%</div>
<div class="t" style="right:1028.00px;top:545.25px;font-size:10.8px;color:#605e5c;font-weight:400;font-style:normal;font-family:'Liberation Serif', serif;">10%</div>
<div class="t" style="right:1010.00px;top:514.96px;font-size:10.8px;color:#605e5c;font-weight:400;font-style:normal;font-family:'Liberation Serif', serif;">4%</div>
<div class="t" style="right:995.00px;top:501.65px;font-size:10.8px;color:#605e5c;font-weight:400;font-style:normal;font-family:'Liberation Serif', serif;">4%</div>
<div class="t" style="right:971.00px;top:491.85px;font-size:10.8px;color:#605e5c;font-weight:400;font-style:normal;font-family:'Liberation Serif', serif;">2%</div>
<div class="t" style="right:954.20px;top:489.35px;font-size:10.8px;color:#605e5c;font-weight:400;font-style:normal;font-family:'Liberation Serif', serif;">1%</div>
<div class="t" style="left:406.60px;top:478.90px;font-size:9.8px;color:#605e5c;font-weight:400;font-style:normal;font-family:'Liberation Sans', sans-serif;">SecureScorePointsAvailable</div>
<div class="t" style="left:622.20px;top:478.80px;font-size:9.8px;color:#605e5c;font-weight:400;font-style:normal;font-family:'Liberation Sans', sans-serif;"># Customers</div>
<svg style="position:absolute;left:407px;top:490.5px" width="6" height="4" viewBox="0 0 6 4"><path d="M0.3 0.3 L3 3.3 L5.7 0.3 Z" fill="#3b3a39"/></svg>
<div style="position:absolute;left:617px;top:473px;width:1px;height:179px;background:#ececec"></div>
<div style="position:absolute;left:402.6px;top:500px;width:287px;height:1.2px;background:#efefef"></div>
<div style="position:absolute;left:408px;top:509px;width:8px;height:8px;box-sizing:border-box;border:1px solid #d2d2d2"><div style="position:absolute;left:1px;top:2.5px;width:4px;height:1px;background:#a8a8a8"></div><div style="position:absolute;left:2.5px;top:1px;width:1px;height:4px;background:#a8a8a8"></div></div>
<div class="t" style="left:423.70px;top:506.64px;font-size:10px;color:#605e5c;font-weight:400;font-style:normal;font-family:'Liberation Sans', sans-serif;">10</div>
<div class="t" style="right:414.50px;top:508.09px;font-size:11px;color:#2b2a29;font-weight:400;font-style:normal;font-family:'Liberation Sans', sans-serif;">24</div>
<div style="position:absolute;left:402.6px;top:524px;width:287px;height:1px;background:#efefef"></div>
<div style="position:absolute;left:408px;top:533px;width:8px;height:8px;box-sizing:border-box;border:1px solid #d2d2d2"><div style="position:absolute;left:1px;top:2.5px;width:4px;height:1px;background:#a8a8a8"></div><div style="position:absolute;left:2.5px;top:1px;width:1px;height:4px;background:#a8a8a8"></div></div>
<div class="t" style="left:423.70px;top:530.63px;font-size:10px;color:#605e5c;font-weight:400;font-style:normal;font-family:'Liberation Sans', sans-serif;">9</div>
<div class="t" style="right:414.50px;top:532.09px;font-size:11px;color:#2b2a29;font-weight:400;font-style:normal;font-family:'Liberation Sans', sans-serif;">49</div>
<div style="position:absolute;left:402.6px;top:548px;width:287px;height:1px;background:#efefef"></div>
<div style="position:absolute;left:408px;top:557px;width:8px;height:8px;box-sizing:border-box;border:1px solid #d2d2d2"><div style="position:absolute;left:1px;top:2.5px;width:4px;height:1px;background:#a8a8a8"></div><div style="position:absolute;left:2.5px;top:1px;width:1px;height:4px;background:#a8a8a8"></div></div>
<div class="t" style="left:423.70px;top:554.63px;font-size:10px;color:#605e5c;font-weight:400;font-style:normal;font-family:'Liberation Sans', sans-serif;">8</div>
<div class="t" style="right:414.50px;top:556.09px;font-size:11px;color:#2b2a29;font-weight:400;font-style:normal;font-family:'Liberation Sans', sans-serif;">66</div>
<div style="position:absolute;left:402.6px;top:572px;width:287px;height:1px;background:#efefef"></div>
<div style="position:absolute;left:408px;top:581px;width:8px;height:8px;box-sizing:border-box;border:1px solid #d2d2d2"><div style="position:absolute;left:1px;top:2.5px;width:4px;height:1px;background:#a8a8a8"></div><div style="position:absolute;left:2.5px;top:1px;width:1px;height:4px;background:#a8a8a8"></div></div>
<div class="t" style="left:423.70px;top:578.63px;font-size:10px;color:#605e5c;font-weight:400;font-style:normal;font-family:'Liberation Sans', sans-serif;">7</div>
<div class="t" style="right:414.50px;top:580.09px;font-size:11px;color:#2b2a29;font-weight:400;font-style:normal;font-family:'Liberation Sans', sans-serif;">32</div>
<div style="position:absolute;left:402.6px;top:596px;width:287px;height:1px;background:#efefef"></div>
<div style="position:absolute;left:408px;top:605px;width:8px;height:8px;box-sizing:border-box;border:1px solid #d2d2d2"><div style="position:absolute;left:1px;top:2.5px;width:4px;height:1px;background:#a8a8a8"></div><div style="position:absolute;left:2.5px;top:1px;width:1px;height:4px;background:#a8a8a8"></div></div>
<div class="t" style="left:423.70px;top:602.63px;font-size:10px;color:#605e5c;font-weight:400;font-style:normal;font-family:'Liberation Sans', sans-serif;">6</div>
<div class="t" style="right:414.50px;top:604.09px;font-size:11px;color:#2b2a29;font-weight:400;font-style:normal;font-family:'Liberation Sans', sans-serif;">56</div>
<div style="position:absolute;left:402.6px;top:620px;width:287px;height:1px;background:#efefef"></div>
<div style="position:absolute;left:408px;top:629px;width:8px;height:8px;box-sizing:border-box;border:1px solid #d2d2d2"><div style="position:absolute;left:1px;top:2.5px;width:4px;height:1px;background:#a8a8a8"></div><div style="position:absolute;left:2.5px;top:1px;width:1px;height:4px;background:#a8a8a8"></div></div>
<div class="t" style="left:423.70px;top:626.63px;font-size:10px;color:#605e5c;font-weight:400;font-style:normal;font-family:'Liberation Sans', sans-serif;">5</div>
<div class="t" style="right:414.50px;top:628.09px;font-size:11px;color:#2b2a29;font-weight:400;font-style:normal;font-family:'Liberation Sans', sans-serif;">87</div>
<div style="position:absolute;left:402.6px;top:644px;width:287px;height:1px;background:#efefef"></div>
<div style="position:absolute;left:711.1px;top:474.1px;width:5.3px;height:85px;background:#ababab;border-radius:3px"></div>
<div style="position:absolute;left:800.8px;top:753.3px;width:11.2px;height:2px;background:#5a5a5a"></div>
<div style="position:absolute;left:823.7px;top:752.2px;width:174px;height:5.6px;background:#e1e2e6;border-radius:3px"></div>
<div style="position:absolute;left:905.2px;top:749.3px;width:11.5px;height:11.5px;border-radius:50%;background:#4169ee"></div>
<div style="position:absolute;left:1009.8px;top:753.3px;width:11.4px;height:2px;background:#5a5a5a"></div>
<div style="position:absolute;left:1014.5px;top:748.6px;width:2px;height:11.4px;background:#5a5a5a"></div>
<div class="t" style="left:1026.70px;top:750.00px;font-size:10.4px;color:#6a6a6a;font-weight:400;font-style:normal;font-family:'Liberation Sans', sans-serif;">100%</div>
<svg style="position:absolute;left:1063px;top:747.5px" width="17" height="14" viewBox="0 0 17 14"><path d="M0.8 4.5 V0.8 H4.5 M12.5 0.8 H16.2 V4.5 M16.2 9.5 V13.2 H12.5 M4.5 13.2 H0.8 V9.5" fill="none" stroke="#6b6e76" stroke-width="1.5"/><rect x="3.3" y="3.4" width="10.2" height="6.8" fill="#6b6e76"/></svg>
</body></html>
